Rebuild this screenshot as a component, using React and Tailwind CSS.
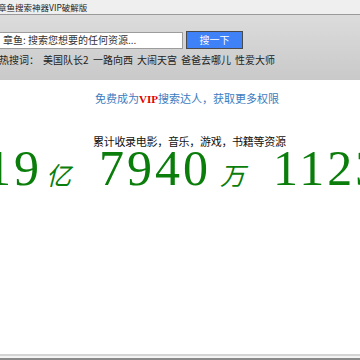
const HOT_WORDS = ["美国队长2  一路向西", "大闹天宫", "爸爸去哪儿", "性爱大师"];

const cjk = { fontFamily: '"SimSun", "Noto Sans CJK SC", sans-serif' };
const serif = { fontFamily: '"Liberation Serif", "Noto Sans CJK SC", serif' };

export default function App() {
  return (
    <div
      className="relative flex h-[360px] w-[360px] flex-col overflow-hidden bg-white text-black"
      style={cjk}
    >
      {/* window title */}
      <div className="flex h-[15px] items-center border-b border-[#9a9a9a] bg-[#efefef] text-[8.5px] leading-none text-[#222]">
        <span className="-ml-[2px]">章鱼搜索神器VIP破解版</span>
      </div>

      {/* search toolbar */}
      <div className="flex h-[65px] flex-col bg-gradient-to-b from-[#dcdcdc] to-[#c9c9c9]">
        <div className="mt-[16px] flex items-center gap-[3px]">
          <div className="-ml-[2px] flex h-[17px] w-[185px] items-center border border-[#9c9c9c] bg-white pl-[4px] text-[10px] leading-none text-[#333]">
            章鱼: 搜索您想要的任何资源...
          </div>
          <button className="flex h-[18px] w-[57px] items-center justify-center border border-[#4a4a4a] bg-[#3f82f7] text-[10px] leading-none text-white">
            搜一下
          </button>
        </div>
        <div className="mt-[6px] flex items-center gap-[4px] whitespace-pre text-[10px] leading-none text-[#222]">
          <span className="-ml-[1px] mr-[0px]">热搜词：</span>
          {HOT_WORDS.map((w) => (
            <span key={w}>{w}</span>
          ))}
        </div>
      </div>

      {/* content */}
      <div className="flex flex-1 flex-col">
        <p className="mt-[13px] pl-[95px] text-[11px] leading-none text-[#3b7cbf]">
          免费成为
          <span className="font-bold text-[#e00000]" style={serif}>
            VIP
          </span>
          搜索达人，获取更多权限
        </p>

        <p className="mt-[31px] pl-[93px] text-[11px] leading-none tracking-[-0.3px] text-[#111]">
          累计收录电影，音乐，游戏，书籍等资源
        </p>

        <div
          className="-ml-[14px] -mt-[4px] flex items-baseline whitespace-nowrap leading-none text-[#0a7d0a]"
          style={serif}
        >
          <span className="text-[50px] tracking-[3px]">19</span>
          <span className="ml-[4px] text-[25px] italic" style={cjk}>
            亿
          </span>
          <span className="ml-[28px] text-[50px] tracking-[3px]">7940</span>
          <span className="ml-[9px] text-[25px] italic" style={cjk}>
            万
          </span>
          <span className="ml-[28px] text-[50px] tracking-[3px]">1123</span>
        </div>
      </div>

      {/* bottom edge */}
      <div className="h-[2px] bg-[#d4d4d4]" />
      <div className="h-[2px] bg-[#f4f4f4]" />
      <div className="h-[2px] bg-[#8a8a8a]" />
    </div>
  );
}
